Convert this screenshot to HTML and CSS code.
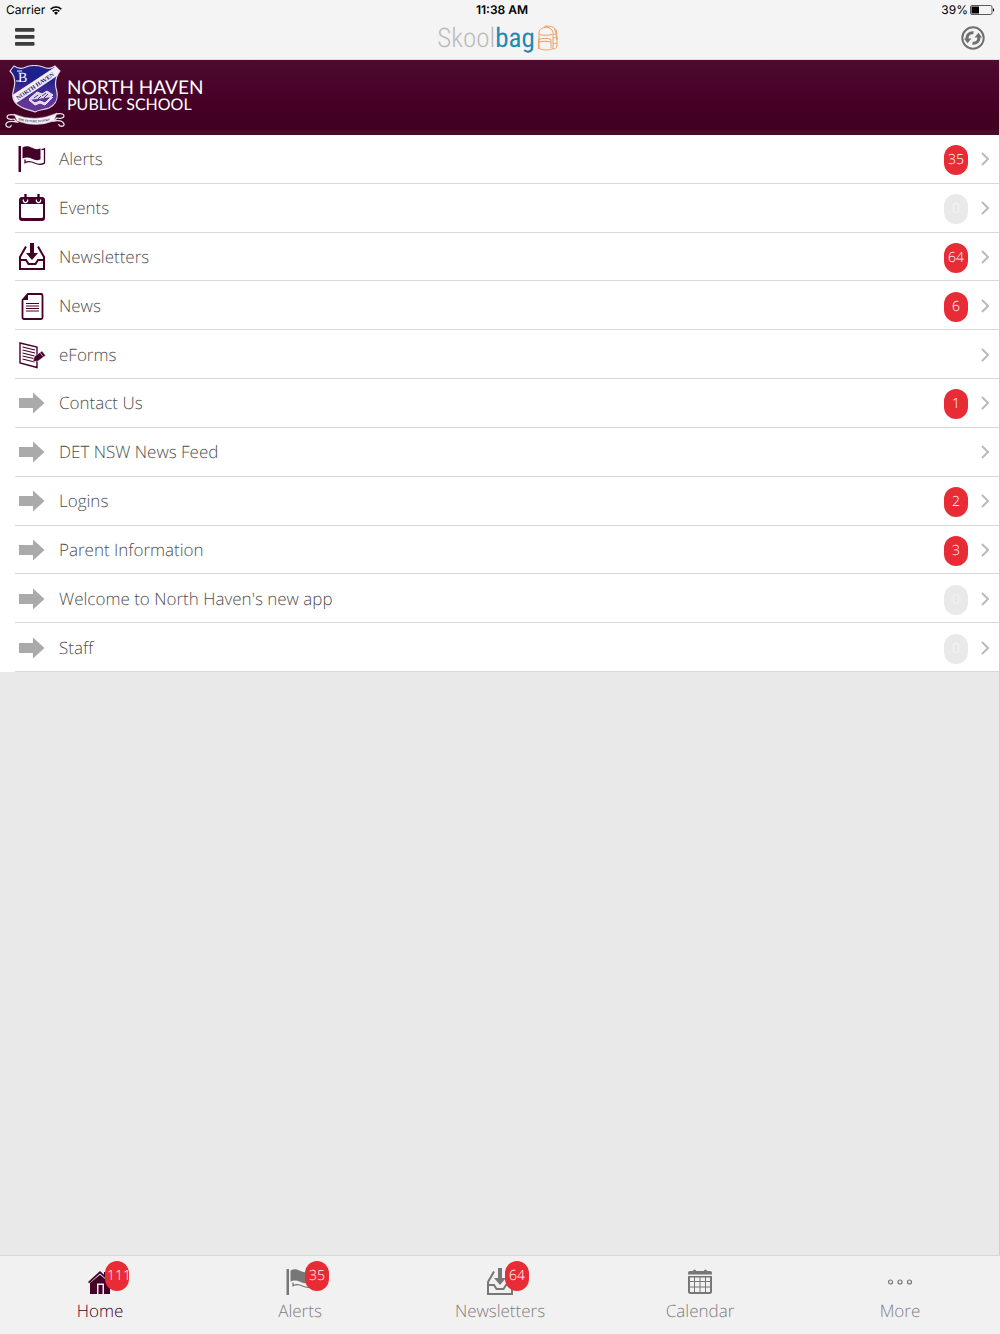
FILE: index.html
```html
<!DOCTYPE html>
<html lang="en">
<head>
<meta charset="utf-8">
<meta name="viewport" content="width=device-width, initial-scale=1">
<title>Skoolbag</title>
<link rel="stylesheet" href="styles.css">
</head>
<body>
<svg class="sprite" aria-hidden="true">
  <symbol id="flag" viewBox="0 0 28 28">
    <path d="M.5 1H3v26H.5z"/>
    <path d="M4.500 2.500C8 .5 11 1 14 2.800c3 1.700 6 1.900 8.500.4v11c-3 1.600-5.500 1-8.500-.4-3-1.500-6-2-9.500-.3z"/>
    <path d="M23.500 4.500c1 0 2-.2 3-.7v14.400c-4 2-7 1.200-10-.2-3.500-1.800-6.500-2-9.500-.4v-3.100" fill="none" stroke="currentColor" stroke-width="1.300"/>
  </symbol>
  <symbol id="event" viewBox="0 0 28 28">
    <path fill-rule="evenodd" d="M4 3h20a3 3 0 0 1 3 3v18a3 3 0 0 1-3 3H4a3 3 0 0 1-3-3V6a3 3 0 0 1 3-3zM3 10v12.500a1.500 1.500 0 0 0 1.500 1.500h19a1.500 1.500 0 0 0 1.500-1.500V10z"/>
    <path d="M5.500 5.500a2.200 2.200 0 1 0 4 0M18.500 5.500a2.200 2.200 0 1 0 4 0" fill="none" stroke="#fff" stroke-width="1.300"/>
    <path d="M6.300 0h2.400v6.500H6.300zM19.300 0h2.400v6.500h-2.400z"/>
  </symbol>
  <symbol id="inbox" viewBox="0 0 28 28">
    <path d="M12 0h4v10h4l-6 7-6-7h4z"/>
    <path d="M8 3.500 2 14v12h24V14L20 3.500M2 17h6l2.500 4h7l2.500-4h6" fill="none" stroke="currentColor" stroke-width="2"/>
  </symbol>
  <symbol id="page" viewBox="0 0 28 28">
    <path d="M10 2h13a1.500 1.500 0 0 1 1.500 1.500v22a1.500 1.500 0 0 1-1.500 1.500H6a1.500 1.500 0 0 1-1.500-1.500V8z" fill="none" stroke="currentColor" stroke-width="1.800"/>
    <path d="M10 1v7H4z"/>
    <path d="M8 11.500h13M8 14h13M8 16.500h13M8 19h13" stroke="currentColor"/>
  </symbol>
  <symbol id="form" viewBox="0 0 28 28">
    <path d="M2 2l17 4v20.500L2 22z" fill="none" stroke="currentColor" stroke-width="1.400"/>
    <path d="M4.500 6 17 9M4.500 9 17 12M4.500 12l12 3M4.500 15l11 2.500M4.500 18l12 3" stroke="currentColor" stroke-width="1.200"/>
    <path d="m15 20.500 1.500-5 7.500-5.500 3.500 4.500-7.500 5.500z" stroke="#fff" stroke-width=".4"/>
    <path d="m22 11.500 3 4" stroke="#fff" stroke-width=".6"/>
  </symbol>
  <symbol id="arrow" viewBox="0 0 28 28">
    <path d="M1 9h14V3.500L26.500 14 15 24.500V19H1z"/>
  </symbol>
  <symbol id="chevron" viewBox="0 0 8 14">
    <path d="m1 1 6 6-6 6" fill="none" stroke="currentColor" stroke-width="2"/>
  </symbol>
  <symbol id="home" viewBox="0 0 28 28">
    <path d="M2 14 14 3l4 3.700V4h3v5.500L26 14l-1.200 1.200L14 5.600 3.200 15.200zM4 15 14 6.800 24 15v11h-6V15.500h-7V26H4z"/>
    <path d="M12.500 17h4v9h-4z"/>
  </symbol>
  <symbol id="calendar" viewBox="0 0 28 28">
    <path fill-rule="evenodd" d="M4 3h3a1.500 1.500 0 0 1 3 0h8a1.500 1.500 0 0 1 3 0h3a2 2 0 0 1 2 2v1.500H2V5a2 2 0 0 1 2-2zM2 8h24v15.500a2.500 2.500 0 0 1-2.500 2.500h-19A2.500 2.500 0 0 1 2 23.500zm2 1.500V13h4V9.500zm5 0V13h4.500V9.500zm5.500 0V13H19V9.500zm5.500 0V13h4V9.500zM4 14v4.500h4V14zm5 0v4.500h4.500V14zm5.500 0v4.500H19V14zm5.500 0v4.500h4V14zM4 19.500V24h4v-4.500zm5 0V24h4.500v-4.500zm5.500 0V24H19v-4.500zm5.500 0V24h4v-4.500z"/>
  </symbol>
  <symbol id="more" viewBox="0 0 28 28">
    <g fill="none" stroke="currentColor" stroke-width="1.200"><circle cx="4.500" cy="14" r="2"/><circle cx="14" cy="14" r="2"/><circle cx="23.500" cy="14" r="2"/></g>
  </symbol>
</svg>
<div class="app">
  <header class="top">
    <div class="status">
      <span class="status-left">Carrier
        <svg class="wifi" viewBox="0 0 12 9" aria-hidden="true"><g fill="none" stroke="#000" stroke-width="1.500"><path d="M.6 3.300a7.700 7.700 0 0 1 10.800 0M2.600 5.400a4.800 4.800 0 0 1 6.800 0"/></g><path d="M4 6.800a2.800 2.800 0 0 1 4 0L6 8.900z"/></svg>
      </span>
      <span class="time">11:38 AM</span>
      <span class="status-right">39%
        <svg class="battery" viewBox="0 0 25 10" aria-hidden="true"><rect x=".5" y=".5" width="21.500" height="9" rx="1.500" fill="none" stroke="#333" stroke-width=".8"/><path d="M1.500 1.500H9v7H1.500z"/><path d="M23 3.300c1.600.3 1.600 3.100 0 3.400z"/></svg>
      </span>
    </div>
    <div class="bar">
      <button class="icon-button" type="button" aria-label="Menu">
        <svg class="menu" viewBox="0 0 20 20"><g fill="#3d3d3d"><rect y="1" width="19.500" height="3.700" rx="1"/><rect y="8" width="19.500" height="3.700" rx="1"/><rect y="15" width="19.500" height="3.700" rx="1"/></g></svg>
      </button>
      <div class="brand"><span class="brand-name">Skool<span class="brand-bag">bag</span></span>
        <svg class="backpack" viewBox="0 0 22 26" aria-hidden="true"><g fill="none" stroke="#e9a06a" stroke-width="1"><path d="M2 23V8c0-3 2-5 6-5.500 4-.5 7 1 8 5v16c-4 2-11 2-14-.5zM7 2.500c0-2 4-2 4.500 0M9 1.500c3-1 9 0 10.500 4.500L20 14"/><path d="M2 9.500c4 1 9 1 13 0M1.500 14.500c4-1.500 9-1.500 12.500 0V23M1.500 14.500V24M2 17c3-1 9-1 12 0M16 9c3 0 4 2 4 5v7c0 2-2 3-4 3M16 13c2-1 4 0 4 2M16 19c2-1 4-1 4 0M17 4c1 1 2 3 2 5"/></g></svg>
      </div>
      <button class="icon-button" type="button" aria-label="Refresh">
        <svg class="refresh" viewBox="0 0 24 24"><circle cx="12" cy="12" r="10.700" fill="none" stroke="#707070" stroke-width="2"/><path d="M6.200 13.500C5.500 9 8.500 6.300 12.500 6.800M17.800 10.500c.7 4.500-2.300 7.200-6.300 6.700" fill="none" stroke="#707070" stroke-width="3"/><path d="M3 12.500h7.500l-4 4.700zM21 11.500h-7.500l4-4.700z" fill="#707070"/></svg>
      </button>
    </div>
  </header>
  <main class="content">
    <div class="banner">
      <svg class="crest" viewBox="0 0 60 64" aria-hidden="true">
        <defs><linearGradient id="shield" x2="0" y2="1"><stop offset=".3" stop-color="#20208c"/><stop offset=".8" stop-color="#653596"/></linearGradient>
        <clipPath id="shield-clip"><path id="shield-path" d="M5 6 9 1q6 4 12 1 8-3 17 0 7 3 12-1l5 5q-6 8-4 17c3 10 1 16-7 20-6 2-11 2-14 4-4-2-9-2-14-5C8 38 6 32 9 23 11 15 9 10 5 6z"/></clipPath></defs>
        <use href="#shield-path" fill="url(#shield)"/>
        <g clip-path="url(#shield-clip)"><path d="M6 31 53 0l5 7L10 39z" fill="#f2effa"/></g>
        <text class="crest-name" transform="translate(13 35) rotate(-34)">NORTH HAVEN</text>
        <use href="#shield-path" fill="none" stroke="#ddd7e8" stroke-width="1.200"/>
        <text class="crest-letter" x="13" y="17">B</text>
        <path d="M12 6h5M11 16h5" stroke="#fff" fill="none"/>
        <path d="m24 34 8-7 5 2 5-3 6 4-8 8-5-2-5 2zM24 35l6 5 5-2 5 2 8-8" fill="#dcd4ed" stroke="#eee"/>
        <path d="m29 33 4-3M32 35l4-4M39 33l4-4M37 31l4-3" stroke="#4d307f"/>
        <path d="M9 49q21 9 43-1l-3 8q-18 7-37 0z" fill="#f5f0f7" stroke="#cbbbc9" stroke-width=".5"/>
        <path d="M10 50c-5-1-8 0-8 2s4 3 7 2l3 3c-5-1-10-1-11 2-1 4 6 4 5 1M51 49c5-1 8 0 8 2s-4 3-7 2l-3 3c5-1 9 0 10 3 1 3-6 3-5 0" fill="none" stroke="#e6dfe6" stroke-width="1.300"/>
        <path id="ribbon" d="M13 55q18 5 37-1" fill="none"/><text class="crest-motto"><textPath href="#ribbon">THE FUTURE IS OURS</textPath></text>
      </svg>
      <h1 class="school"><span class="school-name">NORTH HAVEN</span><span class="school-kind">PUBLIC SCHOOL</span></h1>
    </div>
    <nav class="list" aria-label="Sections">
      <a class="row" href="#alerts"><svg class="icon"><use href="#flag"/></svg><span class="label">Alerts</span><span class="badge">35</span><svg class="chevron"><use href="#chevron"/></svg></a>
      <a class="row" href="#events"><svg class="icon"><use href="#event"/></svg><span class="label">Events</span><span class="badge badge-empty">0</span><svg class="chevron"><use href="#chevron"/></svg></a>
      <a class="row" href="#newsletters"><svg class="icon"><use href="#inbox"/></svg><span class="label">Newsletters</span><span class="badge">64</span><svg class="chevron"><use href="#chevron"/></svg></a>
      <a class="row" href="#news"><svg class="icon"><use href="#page"/></svg><span class="label">News</span><span class="badge">6</span><svg class="chevron"><use href="#chevron"/></svg></a>
      <a class="row" href="#eforms"><svg class="icon"><use href="#form"/></svg><span class="label">eForms</span><svg class="chevron"><use href="#chevron"/></svg></a>
      <a class="row" href="#contact"><svg class="icon icon-arrow"><use href="#arrow"/></svg><span class="label">Contact Us</span><span class="badge">1</span><svg class="chevron"><use href="#chevron"/></svg></a>
      <a class="row" href="#feed"><svg class="icon icon-arrow"><use href="#arrow"/></svg><span class="label">DET NSW News Feed</span><svg class="chevron"><use href="#chevron"/></svg></a>
      <a class="row" href="#logins"><svg class="icon icon-arrow"><use href="#arrow"/></svg><span class="label">Logins</span><span class="badge">2</span><svg class="chevron"><use href="#chevron"/></svg></a>
      <a class="row" href="#parents"><svg class="icon icon-arrow"><use href="#arrow"/></svg><span class="label">Parent Information</span><span class="badge">3</span><svg class="chevron"><use href="#chevron"/></svg></a>
      <a class="row" href="#welcome"><svg class="icon icon-arrow"><use href="#arrow"/></svg><span class="label">Welcome to North Haven's new app</span><span class="badge badge-empty">0</span><svg class="chevron"><use href="#chevron"/></svg></a>
      <a class="row" href="#staff"><svg class="icon icon-arrow"><use href="#arrow"/></svg><span class="label">Staff</span><span class="badge badge-empty">0</span><svg class="chevron"><use href="#chevron"/></svg></a>
    </nav>
  </main>
  <nav class="tabs" aria-label="Main">
    <a class="tab tab-active" href="#home"><span class="tab-icon"><svg class="icon"><use href="#home"/></svg><span class="badge tab-badge">111</span></span>Home</a>
    <a class="tab" href="#alerts"><span class="tab-icon"><svg class="icon"><use href="#flag"/></svg><span class="badge tab-badge">35</span></span>Alerts</a>
    <a class="tab" href="#newsletters"><span class="tab-icon"><svg class="icon"><use href="#inbox"/></svg><span class="badge tab-badge">64</span></span>Newsletters</a>
    <a class="tab" href="#calendar"><span class="tab-icon"><svg class="icon"><use href="#calendar"/></svg></span>Calendar</a>
    <a class="tab" href="#more"><span class="tab-icon"><svg class="icon"><use href="#more"/></svg></span>More</a>
  </nav>
</div>
</body>
</html>
```
FILE: styles.css
```css
* { box-sizing: border-box; }
body { margin: 0; background: #e9e9e9; color: #505050; font-family: "Open Sans", sans-serif; font-weight: 300; text-rendering: geometricPrecision; }
a { color: inherit; text-decoration: none; }
svg { display: block; flex: none; }
.sprite { position: absolute; width: 0; height: 0; }
.app { display: flex; flex-direction: column; min-height: 100vh; }

.top { background: #f4f4f4; border-bottom: 1px solid #ddd; }
.status { display: grid; grid-template-columns: 1fr auto 1fr; align-items: center; height: 20px; padding: 0 5px 0 6px; color: #000; font: 400 12px/20px Inter, sans-serif; }
.status-left, .status-right { display: flex; align-items: center; gap: 5px; }
.status-right { justify-content: flex-end; gap: 2px; }
.time { font-weight: 600; padding-left: 3px; }
.wifi { width: 12px; height: 9px; }
.battery { width: 25px; height: 10px; }
.bar { display: flex; align-items: center; justify-content: space-between; height: 39px; padding: 0 15px 3px; }
.icon-button { padding: 0; border: 0; background: none; }
.menu { width: 20px; height: 20px; margin-bottom: 3px; }
.refresh { width: 24px; height: 24px; }
.brand { display: flex; align-items: center; gap: 2px; }
.brand-name { color: #bbb; font: 300 27px/36px "Roboto Condensed", "Open Sans Condensed", "Open Sans", sans-serif; }
.brand-bag { color: #2189b0; font-weight: 400; }
.backpack { width: 22px; height: 26px; }

.content { flex: 1; border-right: 1px solid #d0d0d0; }
.banner { display: flex; align-items: center; gap: 2px; height: 75px; padding: 0 5px 2px; background: linear-gradient(#4d0b2f, #450026 60%, #400020 93%, #4a0a2c 94%); }
.crest { width: 60px; height: 64px; }
.crest-name { fill: #302067; font: 700 6px "Liberation Serif", serif; }
.crest-letter { fill: #fff; font: 400 14px "Liberation Serif", serif; }
.crest-motto { fill: #302040; font: 700 3px "Liberation Serif", serif; }
.school { display: flex; flex-direction: column; margin: 0; padding-bottom: 2px; color: #fff; font-family: Lato, sans-serif; font-weight: 400; }
.school-name { font-size: 19px; line-height: 17px; }
.school-kind { font-size: 16px; line-height: 17px; }

.list { display: grid; grid-auto-rows: 1fr; min-height: 537px; background: #fff; }
.row { display: flex; align-items: center; margin-left: 15px; padding: 1px 10px 0 3px; border-bottom: 1px solid #d8d8d8; }
.icon { width: 28px; height: 28px; color: #45002a; fill: currentColor; }
.icon-arrow { color: #aaa; }
.label { flex: 1; margin-left: 13px; font-size: 17px; line-height: 24px; }
.badge { width: 24px; height: 30px; border-radius: 12px; background: #e82c35; color: #fff; font-size: 14px; line-height: 30px; text-align: center; }
.row .badge { margin-top: 2px; }
.badge-empty { background: #e9e9e9; color: #f8f8f8; }
.chevron { width: 8px; height: 14px; margin-left: 13px; color: #bbb; }

.tabs { display: grid; grid-template-columns: repeat(5, 1fr); height: 79px; border-top: 1px solid #d8d8d8; background: #f1f1f1; color: #808080; }
.tab { display: flex; flex-direction: column; align-items: center; padding-top: 12px; font-size: 17px; line-height: 24px; }
.tab .icon { color: #777; }
.tab-active, .tab-active .icon { color: #45002a; }
.tab-icon { position: relative; margin-bottom: 3px; }
.tab-badge { position: absolute; left: 19px; top: -7px; overflow: hidden; }
.tab-active .tab-badge { padding-left: 2px; text-align: left; }
```
